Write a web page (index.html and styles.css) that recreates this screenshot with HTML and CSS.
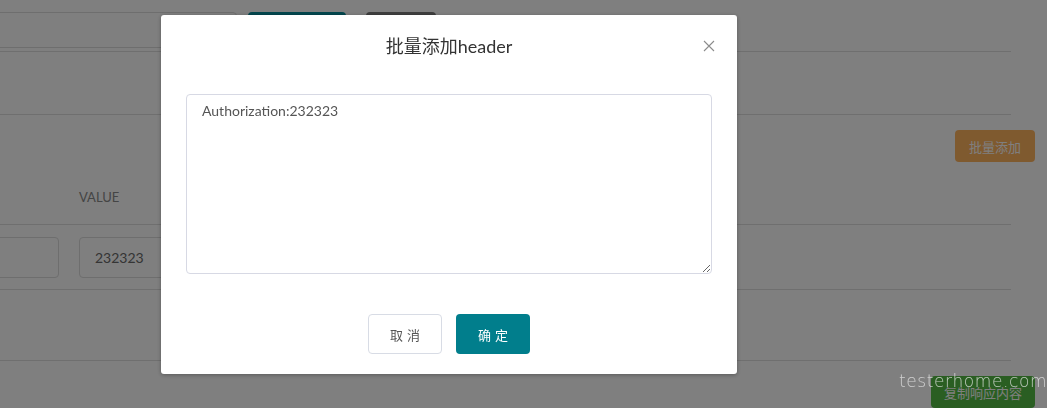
FILE: index.html
```html
<!DOCTYPE html>
<html lang="zh-CN">
  <head>
    <meta charset="UTF-8" />
    <meta name="viewport" content="width=device-width, initial-scale=1.0" />
    <title>批量添加header</title>
    <link rel="stylesheet" href="styles.css">
  </head>
  <body>
    <div class="page">
      <div class="toolbar">
        <input class="url-input" type="text" />
        <button class="btn btn-send">发送</button>
        <button class="btn btn-save">保存</button>
      </div>

      <div class="tabs"></div>

      <div class="section">
        <div class="section-actions">
          <button class="btn btn-batch">批量添加</button>
        </div>

        <div class="header-row">
          <span class="col-key"></span>
          <span class="col-value">VALUE</span>
        </div>

        <div class="param-row">
          <input class="field field-key" type="text" />
          <input class="field field-value" type="text" value="232323" />
        </div>

        <div class="param-empty"></div>

        <div class="section-footer">
          <button class="btn btn-copy">复制响应内容</button>
        </div>
      </div>
    </div>

    <div class="watermark">testerhome.com</div>

    <!-- batch add dialog -->
    <div class="mask">
      <div class="dialog">
        <div class="dialog-header">
          <h3 class="dialog-title">批量添加header</h3>
          <button class="dialog-close" aria-label="close">
            <svg width="12" height="12" viewBox="0 0 12 12">
              <path d="M1 1 L11 11 M11 1 L1 11" stroke="#8c8c8c" stroke-width="1.1" fill="none" />
            </svg>
          </button>
        </div>
        <div class="dialog-body">
          <textarea class="batch-text">Authorization:232323</textarea>
        </div>
        <div class="dialog-footer">
          <button class="btn btn-cancel">取消</button>
          <button class="btn btn-ok">确定</button>
        </div>
      </div>
    </div>
  </body>
</html>
```

FILE: styles.css
```css
body {
  margin: 0;
  font-family: Lato, "Noto Sans CJK SC", sans-serif;
  background-color: #fff;
  color: #555;
}

.page {
  padding-top: 12px;
}

/* top request bar */
.toolbar {
  display: flex;
  gap: 11px;
  height: 36px;
  margin-left: -12px;
}

.url-input {
  width: 249px;
  height: 36px;
  box-sizing: border-box;
  border: 1px solid #dcdcdc;
  border-radius: 4px;
}

.toolbar .btn-save {
  margin-left: 9px;
}

.btn {
  border: none;
  border-radius: 4px;
  font-family: Lato, "Noto Sans CJK SC", sans-serif;
  font-size: 13px;
  cursor: pointer;
}

.btn-send {
  width: 98px;
  background-color: #078d9c;
  color: #fff;
}

.btn-save {
  width: 70px;
  background-color: #7c7c7c;
  color: #fff;
}

.tabs {
  height: 62px;
  margin-top: 3px;
  border-top: 1px solid #dedede;
  border-bottom: 1px solid #dedede;
  margin-right: 36px;
}

.section-actions {
  display: flex;
  justify-content: flex-end;
  padding: 15px 12px 0 0;
}

.btn-batch {
  width: 80px;
  height: 32px;
  background-color: #ffb45f;
  color: #fff;
}

.header-row {
  display: flex;
  height: 54px;
  align-items: center;
  padding-top: 8px;
  margin-right: 36px;
  border-bottom: 1px solid #dedede;
}

.col-key {
  width: 79px;
}

.col-value {
  font-size: 13px;
  color: #8a8a8a;
}

.param-row {
  display: flex;
  gap: 20px;
  padding: 12px 0 11px;
  margin-right: 36px;
  border-bottom: 1px solid #dedede;
}

.field {
  height: 41px;
  box-sizing: border-box;
  border: 1px solid #dcdcdc;
  border-radius: 4px;
  font-family: Lato, sans-serif;
  font-size: 14px;
  color: #6a6a6a;
  padding: 0 15px;
}

.field-key {
  width: 69px;
  margin-left: -10px;
}

.field-value {
  width: 200px;
}

.param-empty {
  height: 70px;
  margin-right: 36px;
  border-bottom: 1px solid #dedede;
}

.section-footer {
  display: flex;
  justify-content: flex-end;
  padding: 15px 12px 0 0;
}

.btn-copy {
  width: 104px;
  height: 32px;
  background-color: #55bc45;
  color: #fff;
}

.watermark {
  position: fixed;
  left: 899px;
  top: 371px;
  z-index: 20;
  font-family: "DejaVu Sans", sans-serif;
  font-size: 17px;
  font-weight: 200;
  letter-spacing: 0.6px;
  color: rgba(235, 235, 235, 0.75);
}

/* modal */
.mask {
  position: fixed;
  inset: 0;
  z-index: 10;
  background-color: rgba(0, 0, 0, 0.5);
}

.dialog {
  position: relative;
  width: 576px;
  height: 359px;
  margin: 15px 0 0 161px;
  box-sizing: border-box;
  background-color: #fff;
  border-radius: 3px;
  box-shadow: 0 1px 4px rgba(0, 0, 0, 0.3);
}

.dialog-header {
  padding: 21px 24px 0;
  text-align: center;
}

.dialog-title {
  margin: 0;
  font-size: 18px;
  font-weight: 400;
  line-height: 20px;
  color: #333;
}

.dialog-close {
  position: absolute;
  top: 25px;
  right: 22px;
  padding: 0;
  width: 12px;
  height: 12px;
  border: none;
  background: none;
  cursor: pointer;
}

.dialog-body {
  padding: 38px 25px 0;
}

.batch-text {
  display: block;
  width: 100%;
  height: 180px;
  box-sizing: border-box;
  padding: 6px 15px;
  border: 1px solid #d7d9e4;
  border-radius: 4px;
  font-family: Lato, sans-serif;
  font-size: 14px;
  line-height: 20px;
  color: #555;
  outline: none;
}

.dialog-footer {
  display: flex;
  justify-content: center;
  gap: 14px;
  padding-top: 40px;
}

.btn-cancel,
.btn-ok {
  width: 74px;
  height: 40px;
  letter-spacing: 4px;
  text-indent: 4px;
  font-size: 13px;
}

.btn-cancel {
  background-color: #fff;
  border: 1px solid #d8dce5;
  color: #555;
}

.btn-ok {
  background-color: #017e8c;
  color: #fff;
}
```
